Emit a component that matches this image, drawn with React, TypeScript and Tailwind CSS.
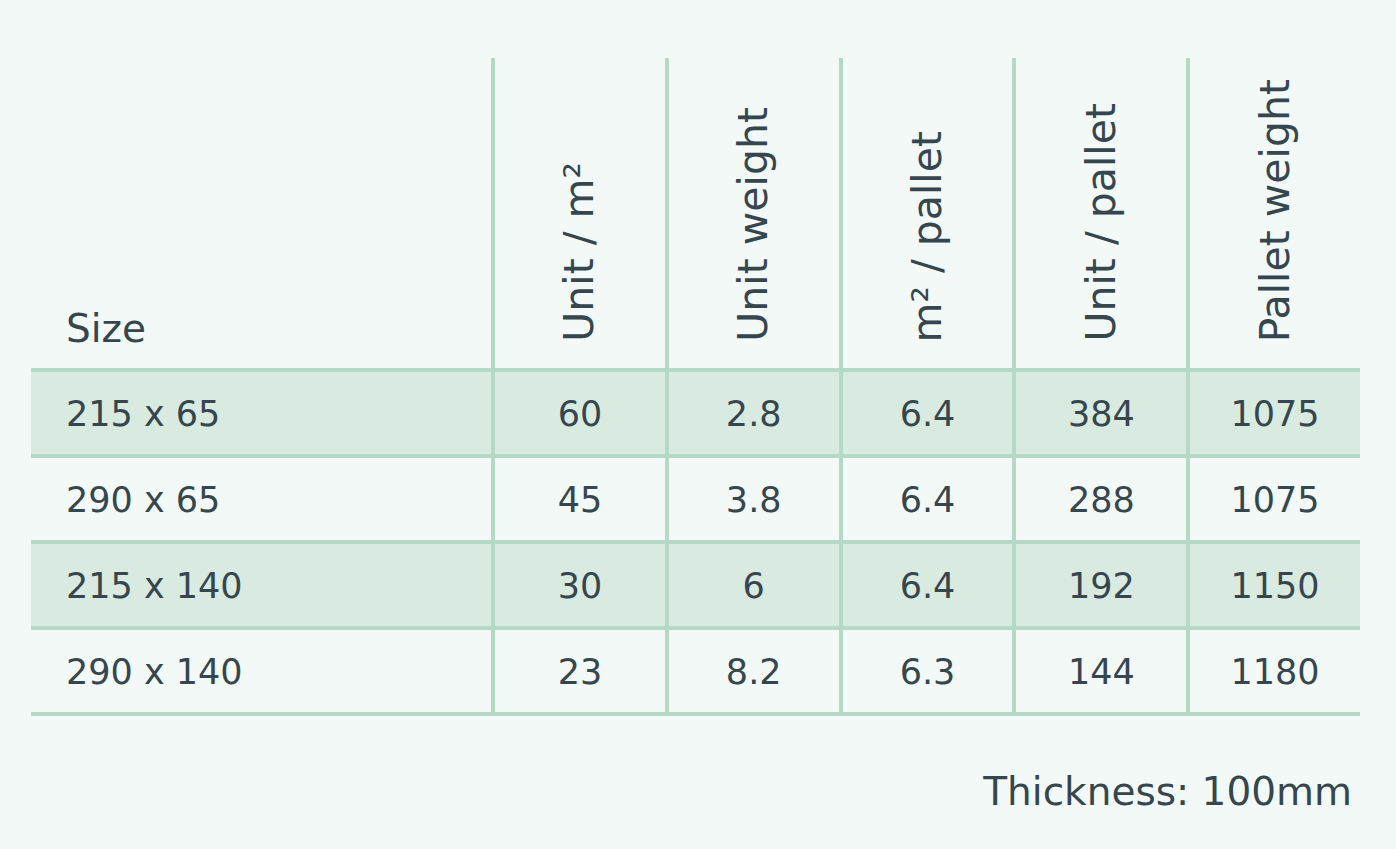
const headers = ["Unit / m²", "Unit weight", "m² / pallet", "Unit / pallet", "Pallet weight"];

const rows = [
  { size: "215 x 65", values: ["60", "2.8", "6.4", "384", "1075"] },
  { size: "290 x 65", values: ["45", "3.8", "6.4", "288", "1075"] },
  { size: "215 x 140", values: ["30", "6", "6.4", "192", "1150"] },
  { size: "290 x 140", values: ["23", "8.2", "6.3", "144", "1180"] },
];

export default function App() {
  return (
    <div
      className="min-h-screen w-full bg-[#f3f9f6] text-[#36464e] pt-[58px] pl-[31px]"
      style={{ fontFamily: '"DejaVu Sans", "Noto Sans", sans-serif' }}
    >
      <div className="w-[1329px]">
        <div className="grid grid-cols-[460px_repeat(5,1fr)]">
          {/* header */}
          <div className="h-[310px] flex items-end pl-[35px] pb-[20px] text-[39px] leading-none">
            Size
          </div>
          {headers.map((h) => (
            <div
              key={h}
              className="h-[310px] border-l-4 border-[#b4d9c7] flex items-end justify-center pb-[26px]"
            >
              <span className="[writing-mode:vertical-rl] rotate-180 text-[41px] leading-none whitespace-nowrap">
                {h}
              </span>
            </div>
          ))}

          {/* body */}
          {rows.map((r, i) => {
            const bg = i % 2 === 0 ? "bg-[#d9ebe1]" : "bg-[#f3f9f6]";
            const last = i === rows.length - 1;
            return [
              <div
                key={r.size}
                className={`${bg} border-t-4 border-[#b4d9c7] flex items-center pl-[35px] pt-[3px] text-[35px] ${last ? "border-b-4 h-[90px]" : "h-[86px]"}`}
              >
                {r.size}
              </div>,
              ...r.values.map((v, j) => (
                <div
                  key={r.size + j}
                  className={`${bg} border-t-4 border-l-4 border-[#b4d9c7] flex items-center justify-center pt-[3px] text-[35px] ${last ? "border-b-4 h-[90px]" : "h-[86px]"}`}
                >
                  {v}
                </div>
              )),
            ];
          })}
        </div>

        <div className="flex justify-end pr-[8px] mt-[56px] text-[39px] leading-none">
          Thickness: 100mm
        </div>
      </div>
    </div>
  );
}
